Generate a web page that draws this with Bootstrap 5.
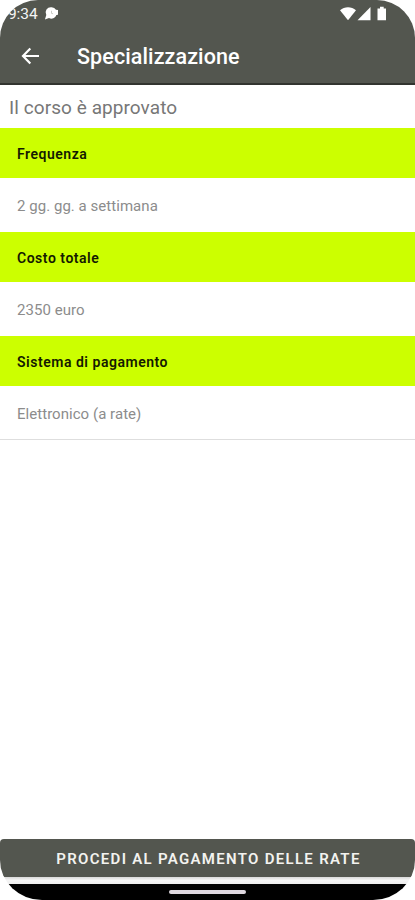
<!DOCTYPE html>
<html lang="it">
<head>
<meta charset="utf-8">
<meta name="viewport" content="width=device-width, initial-scale=1">
<title>Specializzazione</title>
<link href="https://cdn.jsdelivr.net/npm/bootstrap@5.3.0/dist/css/bootstrap.min.css" rel="stylesheet">
<style>
body{font-family:Roboto,"Liberation Sans",sans-serif;background:#fff}
.screen{height:900px;border-radius:38px 38px 42px 42px/38px 38px 40px 40px;background:#fff}
.top{height:85px;background:#53564f;border-bottom:2px solid #32342f}
.status{height:27px;padding-left:8px;padding-right:27px}
.clock{font-size:15.5px;line-height:28px;letter-spacing:-.1px;color:#f4f4f4}
.titlebar{height:58px;padding-left:20px}
.title-text{font-size:21.5px;font-weight:500;line-height:58px;margin-left:37px;padding-top:2px;letter-spacing:.1px}
.intro{height:43px;line-height:45px;font-size:19px;letter-spacing:.07px;padding-left:9px;color:#777}
.label-row{height:50px;line-height:52px;background:#cf0;padding-left:17px;font-size:14px;font-weight:600;letter-spacing:.52px;color:#141a00}
.value-row{height:54px;line-height:56px;padding-left:17px;font-size:15px;letter-spacing:.04px;color:#8c8c8c}
.value-row.last-row{border-bottom:1px solid #dedede}
.pay{height:38px;line-height:40px;padding:0 0 0 2px;border:0;border-radius:4px;background:#53564f;color:#f3f3f0;font-size:15px;font-weight:600;letter-spacing:1.3px}
.strip{height:7px;background:linear-gradient(#d8d8d8,#f5f5f5 45%,#eee)}
.gesture{height:16px}
.handle{width:77px;height:4px;background:#ded8df}
</style>
</head>
<body>
<div class="screen d-flex flex-column overflow-hidden">
  <header class="top text-white flex-shrink-0">
    <div class="status d-flex align-items-center">
      <span class="clock">9:34</span>
      <svg style="margin-left:6px" width="15" height="15" viewBox="0 0 15 15" fill="#fff"><path d="M7.500 1.200a5 5 0 0 1 4.500 2.600l2 .2v4.800l-1.600.3A5.200 5.200 0 0 1 5 12L.900 13.600l1.400-4.500A5.300 5.300 0 0 1 7.500 1.200z"/><path d="M7.500 4.800v2.600l1.600.3" fill="none" stroke="#c9cbc6" stroke-width="1"/></svg>
      <svg class="ms-auto" width="49" height="16" viewBox="0 0 49 16" fill="#fff"><path d="M1 4.200C5.500.200 12.500.200 17 4.200L9 14.300z"/><path d="M31.500 1v13.300H18.500z"/><path d="M38.500 2.500h2.500V.700h3.700v1.800h2.300v11.800h-8.500z"/></svg>
    </div>
    <div class="titlebar d-flex align-items-center">
      <svg width="20" height="18" viewBox="0 0 20 18" fill="none" stroke="#fff" stroke-width="2.200"><path d="M10.300 1.500 3 9l7.300 7.500M3 9h16"/></svg>
      <h1 class="title-text mb-0">Specializzazione</h1>
    </div>
  </header>
  <main class="flex-grow-1">
    <div class="intro">Il corso è approvato</div>
    <div class="label-row">Frequenza</div>
    <div class="value-row">2 gg. gg. a settimana</div>
    <div class="label-row">Costo totale</div>
    <div class="value-row">2350 euro</div>
    <div class="label-row">Sistema di pagamento</div>
    <div class="value-row last-row">Elettronico (a rate)</div>
  </main>
  <button type="button" class="btn pay w-100 flex-shrink-0">PROCEDI AL PAGAMENTO DELLE RATE</button>
  <div class="strip flex-shrink-0"></div>
  <div class="gesture bg-black d-flex justify-content-center align-items-center flex-shrink-0"><div class="handle rounded-pill"></div></div>
</div>
<script src="https://cdn.jsdelivr.net/npm/bootstrap@5.3.0/dist/js/bootstrap.bundle.min.js"></script>
</body>
</html>
